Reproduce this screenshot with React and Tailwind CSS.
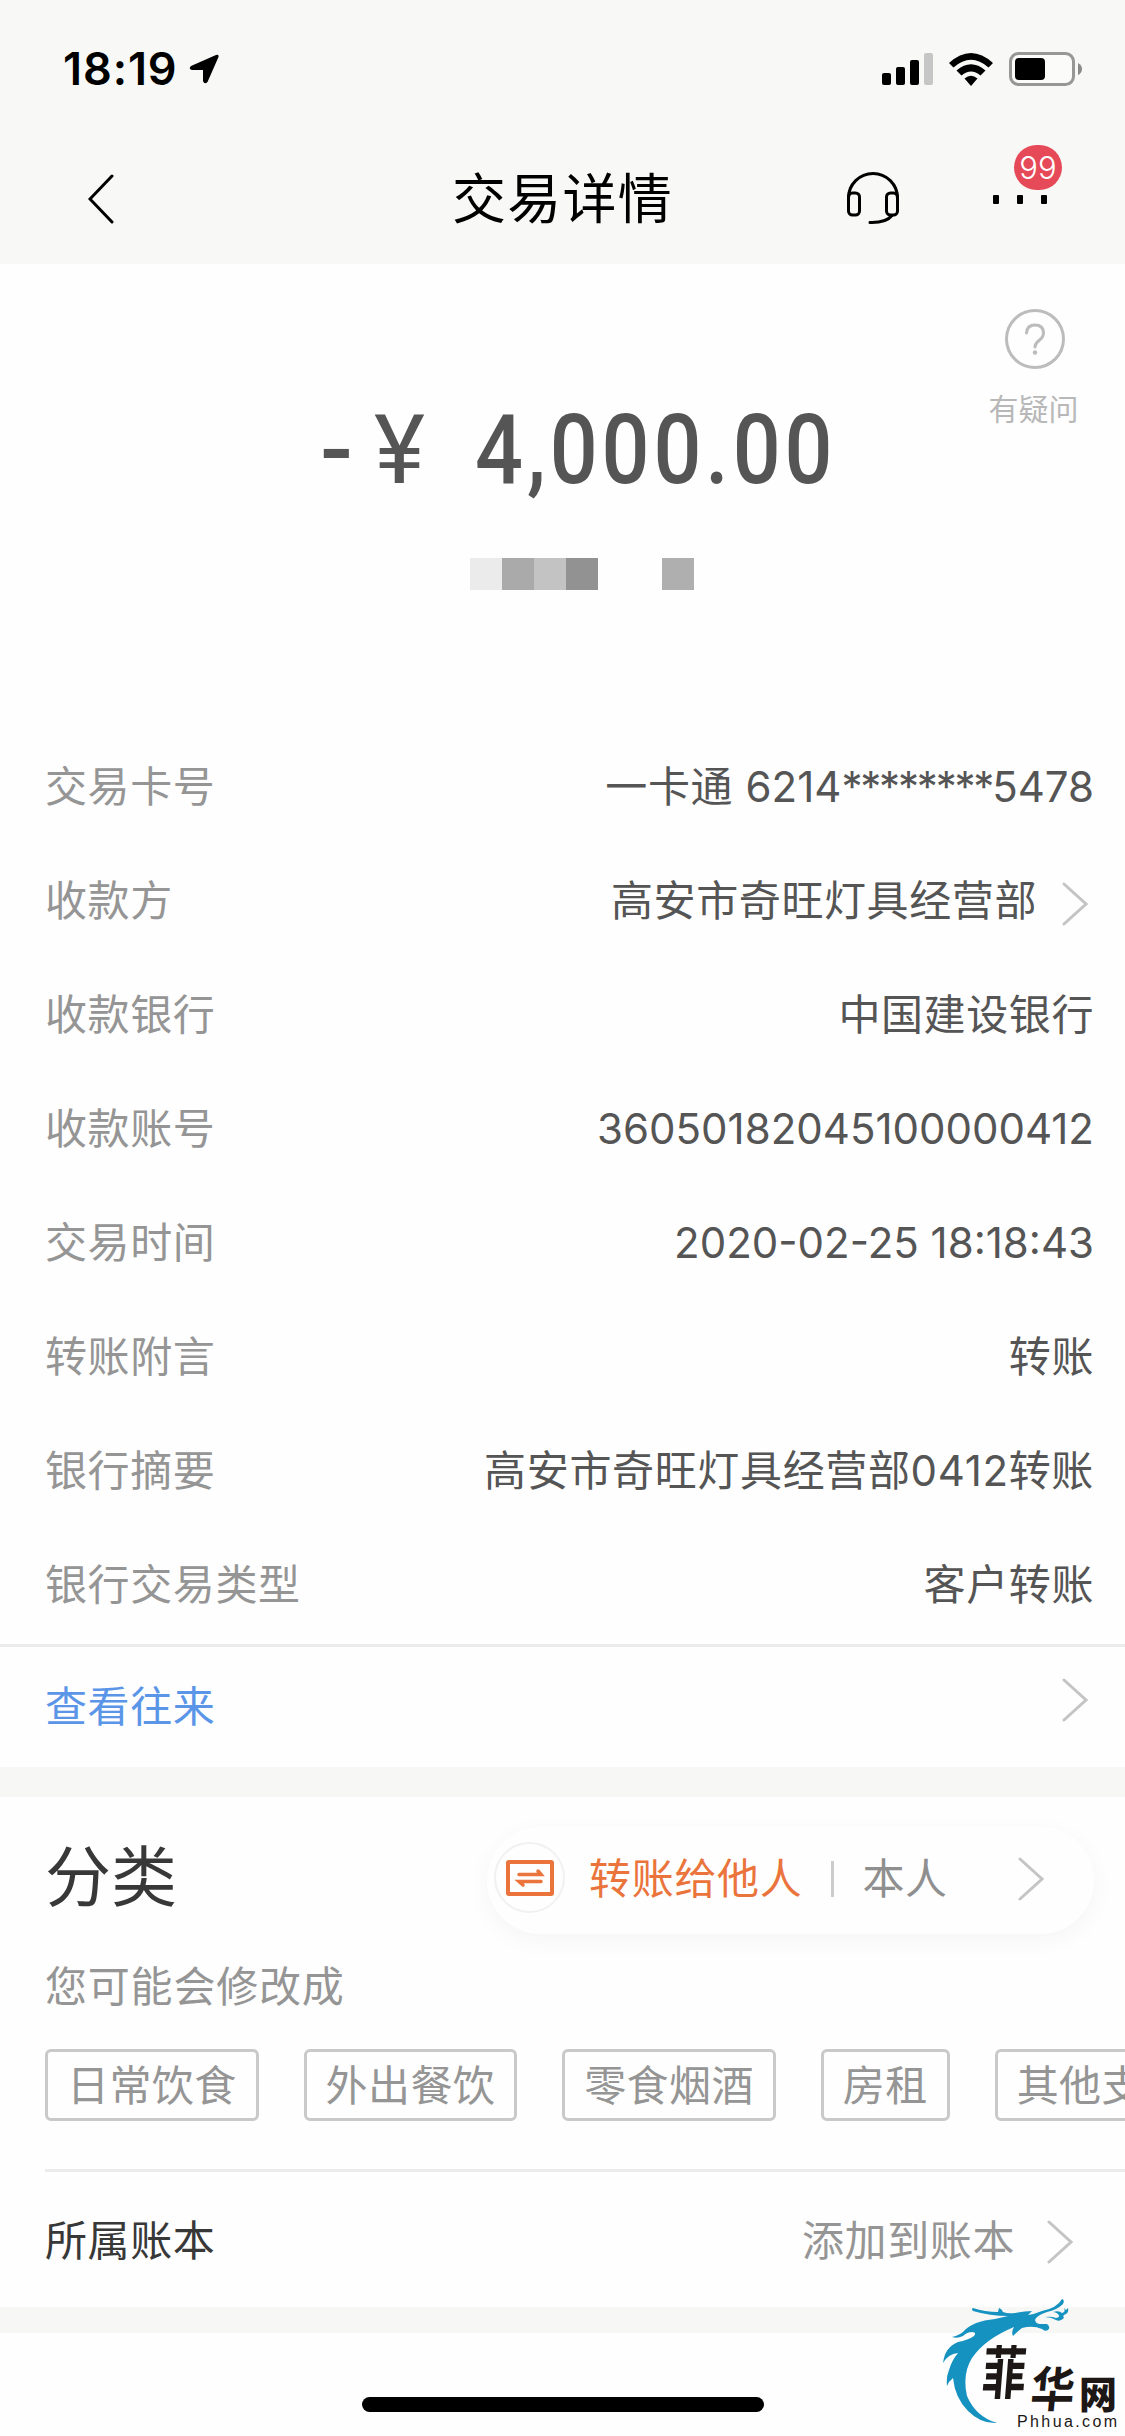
import clsx from 'clsx';

const details = [
    {
        label: '交易卡号',
        value: (
            <>
                <span className="tracking-[0.6px]">一卡通 </span>
                <span>6214</span>
                <span className="tracking-[-2.2px]">********</span>
                <span>5478</span>
            </>
        ),
    },
    { label: '收款方', value: '高安市奇旺灯具经营部', tracking: 'tracking-[0.6px]', link: true },
    { label: '收款银行', value: '中国建设银行', tracking: 'tracking-[0.6px]' },
    { label: '收款账号', value: '36050182045100000412' },
    { label: '交易时间', value: '2020-02-25 18:18:43' },
    { label: '转账附言', value: '转账', tracking: 'tracking-[0.6px]' },
    { label: '银行摘要', value: '高安市奇旺灯具经营部0412转账', tracking: 'tracking-[0.65px]' },
    { label: '银行交易类型', value: '客户转账', tracking: 'tracking-[0.6px]' },
];

const tags = ['日常饮食', '外出餐饮', '零食烟酒', '房租', '其他支出'];

function Chevron({ className }) {
    return (
        <svg viewBox="0 0 26 44" className={clsx('w-[26px] h-[44px] shrink-0', className)} fill="none" stroke="#c4c4c4" strokeWidth="3" strokeLinecap="round">
            <path d="M2 2 L24 22 L2 42" />
        </svg>
    );
}

function StatusBar() {
    return (
        <div className="h-[138px] flex items-center justify-between pl-[63px] pr-[42px]">
            <div className="flex items-center gap-[11px]">
                <span className="text-[45px] leading-[54px] font-semibold tracking-[0.9px]">18:19</span>
                <svg viewBox="0 0 30 30" className="w-[30px] h-[30px]">
                    <path d="M27 1 L2 12 Q-1 15 3 16 H14 V27 Q15.500 31 18.500 28 L29.500 3 Q30 0 27 1Z" />
                </svg>
            </div>
            <div className="flex items-center">
                <svg viewBox="0 0 51 32" className="w-[51px] h-[32px]">
                    <rect x="0" y="20" width="9" height="12" rx="2" />
                    <rect x="14" y="14" width="9" height="18" rx="2" />
                    <rect x="28" y="7" width="9" height="25" rx="2" />
                    <rect x="42" y="0" width="9" height="32" rx="2" fill="#c6c6c6" />
                </svg>
                <svg viewBox="0 0 44 33" className="w-[44px] h-[33px] ml-4">
                    <path d="M0 10 Q22 -10 44 10 L39.500 14.500 Q22 -1 4.500 14.500Z" />
                    <path d="M7.500 17.500 Q22 5 36.500 17.500 L31.500 22.500 Q22 14.500 12.500 22.500Z" />
                    <path d="M15.500 25.500 Q22 20 28.500 25.500 L22 33Z" />
                </svg>
                <svg viewBox="0 0 74 34" className="w-[74px] h-[34px] ml-4">
                    <rect x="1.500" y="1.500" width="63" height="31" rx="8" fill="#fbfbfa" stroke="#979797" strokeWidth="3" />
                    <rect x="6" y="6" width="30" height="22" rx="4" />
                    <path d="M69 11 Q73 13 73 17 Q73 21 69 23Z" fill="#8a8a8a" />
                </svg>
            </div>
        </div>
    );
}

function NavBar() {
    return (
        <div className="h-[126px] grid grid-cols-3 items-start">
            <svg viewBox="0 0 26 50" className="w-[26px] h-[50px] ml-[88px] mt-9" fill="none" stroke="#000" strokeWidth="3" strokeLinecap="round">
                <path d="M24 2 L2 25 L24 48" />
            </svg>
            <h1 className="text-[54px] leading-[80px] tracking-[1.2px] font-normal text-center mt-[22px]">交易详情</h1>
            <div className="flex justify-end pr-[78px] mt-[33px]">
                <svg viewBox="0 0 54 54" className="w-[54px] h-[54px] mr-[93px]" fill="none" stroke="#000" strokeWidth="3" strokeLinecap="round">
                    <path d="M2.500 30 V27 A24.500 24.500 0 0 1 51.500 27 V30" />
                    <rect x="2.500" y="22" width="11" height="22" rx="4" />
                    <rect x="40.500" y="22" width="11" height="22" rx="4" />
                    <path d="M46 44.500 Q40 52 24 51.500" />
                </svg>
                <div className="relative flex gap-[18px] pt-6">
                    <i className="w-[6px] h-[9px] rounded-[1px] bg-black" />
                    <i className="w-[6px] h-[9px] rounded-[1px] bg-black" />
                    <i className="w-[6px] h-[9px] rounded-[1px] bg-black" />
                    <span className="absolute left-[21px] top-[-26px] w-12 h-[45px] rounded-full bg-[#e64a58] text-white text-[31px] leading-[45px] font-light text-center">99</span>
                </div>
            </div>
        </div>
    );
}

function Amount() {
    return (
        <section className="relative h-[465px] pt-[136px]">
            <div className="flex items-center h-[100px] pl-[320px] text-[#555] font-[Roboto] text-[97px] leading-[100px]">
                <span className="w-[54px] font-medium">-</span>
                <span className="w-[101px]">¥</span>
                <span className="font-medium tracking-[4.5px] scale-x-[0.87] origin-left">4,000.00</span>
            </div>
            {/* masked account name */}
            <div className="flex h-8 mt-[58px] pl-[470px]">
                <i className="w-8 bg-[#ebebeb]" />
                <i className="w-8 bg-[#aaaaaa]" />
                <i className="w-8 bg-[#c3c3c3]" />
                <i className="w-8 bg-[#929292]" />
                <i className="w-8 ml-16 bg-[#afafaf]" />
            </div>
            <div className="absolute right-[45px] top-[45px] w-[90px] flex flex-col items-center text-[#b8b8b8]">
                <svg viewBox="0 0 60 60" className="w-[60px] h-[60px]" fill="none" stroke="#bcbcbc" strokeWidth="3" strokeLinecap="round">
                    <circle cx="30" cy="30" r="28.500" />
                    <path d="M21.500 24 Q22 16 30 16 Q38.500 16 38.500 24 Q38.500 28 34 31.500 Q30 34.500 30 38" />
                    <circle cx="30" cy="43.500" r="2.200" fill="#bcbcbc" stroke="none" />
                </svg>
                <span className="text-[30px] leading-[44px] mt-[18px] mr-[3px] whitespace-nowrap">有疑问</span>
            </div>
        </section>
    );
}

function DetailRow({ label, value, tracking, link }) {
    return (
        <div className="h-[114px] flex items-center justify-between pl-[45px] pr-[31px] pt-[2px]">
            <span className="text-[#959595] tracking-[0.6px]">{label}</span>
            <span className="flex items-center text-[#555]">
                <span className={tracking}>{value}</span>
                {link && <Chevron className="ml-[25px] mr-[6px] mt-1.5" />}
            </span>
        </div>
    );
}

function Category() {
    return (
        <section className="overflow-hidden">
            <div className="flex items-start justify-between pl-[45px] pr-[31px] pt-[30px]">
                <h2 className="text-[66px] leading-[96px] font-normal text-[#383838] mt-[2px]">分类</h2>
                <div className="w-[607px] h-[107px] rounded-full flex items-center pl-[7px] shadow-[0_6px_24px_rgba(0,0,0,0.04)]">
                    <span className="w-[71px] h-[71px] rounded-full border-2 border-[#f2f0f0] flex items-center justify-center mt-[-6px]">
                        <svg viewBox="0 0 48 36" className="w-[48px] h-[36px]" fill="none" stroke="#ea743c" strokeWidth="4">
                            <rect x="2" y="2" width="44" height="32" rx="1" />
                            <path d="M13 14.500 H35 L32 11" strokeWidth="3.500" strokeLinecap="round" />
                            <path d="M35 21.500 H13 L17 25" strokeWidth="3.500" strokeLinecap="round" />
                        </svg>
                    </span>
                    <span className="ml-6 mt-[-4px] text-[#ea743c] tracking-[0.7px]">转账给他人</span>
                    <i className="w-[3px] h-9 ml-[28px] mt-[-4px] bg-[#cccccc]" />
                    <span className="ml-[29px] mt-[-4px] text-[#8f8f8f] tracking-[0.6px]">本人</span>
                    <Chevron className="ml-[70px] mt-[-4px]" />
                </div>
            </div>
            <p className="pl-[45px] mt-[23px] leading-[60px] text-[#959595] tracking-[0.8px]">您可能会修改成</p>
            <div className="flex gap-[45px] pl-[45px] mt-[32px]">
                {tags.map(tag => (
                    <span key={tag} className="h-[72px] px-[19px] border-[3px] border-[#c9c9c9] rounded-[6px] leading-[67px] text-[#959595] tracking-[0.4px] whitespace-nowrap shrink-0">{tag}</span>
                ))}
            </div>
            <div className="ml-[45px] mt-12 border-t-[3px] border-[#ebebeb] h-[138px] flex items-center justify-between pr-[52px] pt-[2px]">
                <span className="text-[#383838] tracking-[0.6px]">所属账本</span>
                <span className="flex items-center text-[#959595] tracking-[0.6px]">
                    添加到账本
                    <Chevron className="ml-[32px] mt-[2px]" />
                </span>
            </div>
        </section>
    );
}

// dragon logo with the site name, pinned to the corner
function SiteMark() {
    return (
        <div className="absolute left-[935px] top-[2290px] w-[190px] h-[146px] text-[#1d1816]">
            <svg viewBox="0 0 190 146" className="absolute inset-0 w-[190px] h-[146px]" fill="#1592c0">
                <path d="M38 18 Q50 22 63 22 L64 18 Q67 19 68 22 Q73 24 80 23 Q90 21 97 21 L93 25 Q100 24 107 21 Q122 18 127 9 Q130 10 128 14 Q122 20 112 22 Q102 25 100 30 Q101 34 105 34 L112 34 Q116 37 113 40 Q110 42 107 39 Q98 35 87 38 Q83 41 78 46 Q76 42 79 37 Q50 49 37 68 Q27 84 32 106 Q41 127 62 133 Q46 134 33 121 Q20 108 18 88 Q14 91 12 96 Q11 87 14 80 Q17 70 23 63 Q13 64 8 73 Q10 57 23 52 Q33 50 39 46 Q42 42 37 42 Q32 42 28 46 Q22 49 17 47 Q25 45 29 41 Q38 31 60 29 L73 26 Q55 26 38 21 Q36 19 38 18Z" />
                <path d="M110 27 Q116 26 121 28 Q126 27 123 24 Q121 22 118 22 Q124 20 127 23 Q131 22 129 18 L131 20 L133 18 Q134 22 131 24 Q127 25 129 28 Q125 32 121 30 Q116 27 110 27Z" />
            </svg>
            <span className="absolute left-[45px] top-[57px] text-[49px] leading-[54px] font-bold -skew-x-6 scale-x-90 scale-y-[1.18]">菲</span>
            <span className="absolute left-[96px] top-[74px] text-[44px] leading-[50px] font-bold -skew-x-6 scale-y-110">华</span>
            <span className="absolute left-[144px] top-[84px] text-[38px] leading-[40px] font-black">网</span>
            <span className="absolute left-[82px] top-[122px] text-[16px] leading-[20px] tracking-[2.4px] font-['Liberation_Sans',sans-serif]">Phhua.com</span>
        </div>
    );
}

export default function App() {
    return (
        <main className="relative w-[1125px] h-[2436px] overflow-hidden bg-[#fefefe] text-black text-[42px] leading-[60px] font-['Inter','Noto_Sans_CJK_SC',sans-serif]">
            <header className="h-[264px] bg-[#f8f8f6]">
                <StatusBar />
                <NavBar />
            </header>
            <Amount />
            <section className="h-[915px]">
                {details.map(row => <DetailRow key={row.label} {...row} />)}
            </section>
            <div className="h-[123px] flex items-center justify-between pl-[45px] pr-[37px] border-t-[3px] border-[#ebebeb]">
                <span className="text-[#5b95e8] tracking-[0.6px]">查看往来</span>
                <Chevron className="mt-[-14px]" />
            </div>
            <div className="h-[30px] bg-[#f7f7f6]" />
            <Category />
            <div className="h-[26px] bg-[#f7f7f6]" />
            <div className="w-[402px] h-[15px] mt-[64px] mx-auto rounded-full bg-black" />
            <SiteMark />
        </main>
    );
}
